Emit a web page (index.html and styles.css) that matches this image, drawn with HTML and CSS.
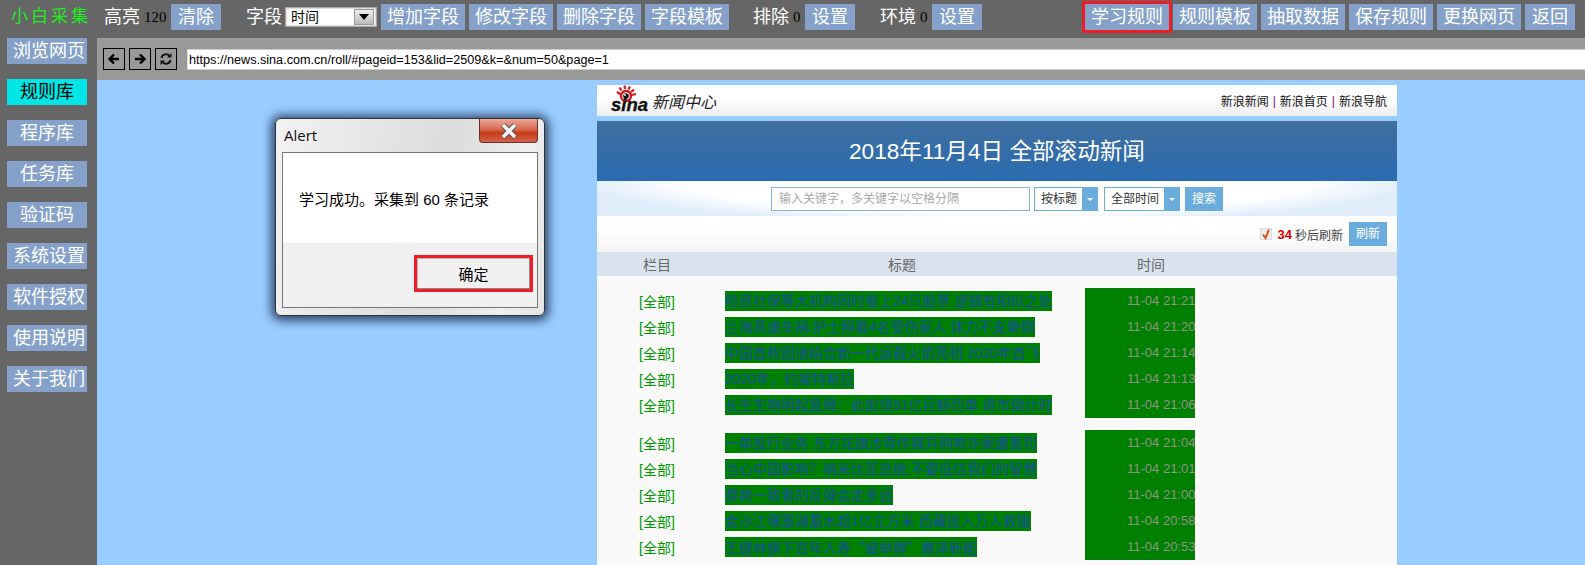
FILE: index.html
```html
<!DOCTYPE html>
<html lang="zh">
<head>
<meta charset="utf-8">
<title>小白采集</title>
<link rel="stylesheet" href="styles.css">
</head>
<body>
<header class="topbar">
  <div class="brand">小白采集</div>
  <div class="group">
    <span class="label">高亮</span><span class="count">120</span><button class="btn two">清除</button>
  </div>
  <div class="group">
    <span class="label">字段</span>
    <div class="select"><span class="select-text">时间</span><span class="select-arrow"></span></div>
    <button class="btn">增加字段</button><button class="btn">修改字段</button><button class="btn">删除字段</button><button class="btn">字段模板</button>
  </div>
  <div class="group tight">
    <span class="label">排除</span><span class="count">0</span><button class="btn two">设置</button>
  </div>
  <div class="group">
    <span class="label">环境</span><span class="count">0</span><button class="btn two">设置</button>
  </div>
  <div class="group end">
    <button class="btn marked">学习规则</button><button class="btn">规则模板</button><button class="btn">抽取数据</button><button class="btn">保存规则</button><button class="btn">更换网页</button><button class="btn two">返回</button>
  </div>
</header>

<div class="main">
  <nav class="sidebar">
    <a class="nav-item long">浏览网页</a>
    <a class="nav-item active">规则库</a>
    <a class="nav-item">程序库</a>
    <a class="nav-item">任务库</a>
    <a class="nav-item">验证码</a>
    <a class="nav-item long">系统设置</a>
    <a class="nav-item long">软件授权</a>
    <a class="nav-item long">使用说明</a>
    <a class="nav-item long">关于我们</a>
  </nav>

  <div class="browser">
    <div class="toolbar">
      <button class="tool"><svg viewBox="0 0 14 14" width="14" height="14"><path d="M12 7H3M7 2.500 2.500 7 7 11.500" fill="none" stroke="#000" stroke-width="2.400"/></svg></button>
      <button class="tool"><svg viewBox="0 0 14 14" width="14" height="14"><path d="M2 7h9M7 2.500 11.500 7 7 11.500" fill="none" stroke="#000" stroke-width="2.400"/></svg></button>
      <button class="tool"><svg viewBox="0 0 14 14" width="14" height="14"><path d="M2.500 6a4.500 4.500 0 0 1 8-2M11.500 8a4.500 4.500 0 0 1-8 2" fill="none" stroke="#111" stroke-width="2"/><path d="M12.500 1v4.500H8M1.500 13V8.500H6" fill="#111"/></svg></button>
      <div class="address">https://news.sina.com.cn/roll/#pageid=153&amp;lid=2509&amp;k=&amp;num=50&amp;page=1</div>
    </div>

    <div class="viewport">
      <div class="page">
        <div class="site-head">
          <div class="logo">
            <svg class="sina-mark" viewBox="0 0 40 31" width="40" height="31">
              <g fill="none" stroke="#d6141a">
                <circle cx="16" cy="11" r="5" stroke-width="2.400"/>
                <path d="M10 9 7 7M11.500 5.500 9.500 2.500M15 4 14.500 .5M18.500 4.500 20 1.500M21 7 24 4.500M22 10 26 9" stroke-width="2.200"/>
              </g>
              <circle cx="16" cy="11" r="2.800" fill="#111"/>
              <circle cx="15" cy="10" r=".9" fill="#fff"/>
              <text class="sina-word" x="1" y="26">sina</text>
            </svg>
            <span class="logo-text">新闻中心</span>
          </div>
          <div class="site-links"><a>新浪新闻</a><i>|</i><a>新浪首页</a><i>|</i><a>新浪导航</a></div>
        </div>

        <div class="banner">2018年11月4日 全部滚动新闻</div>

        <div class="search-row">
          <div class="search-input">输入关键字，多关键字以空格分隔</div>
          <div class="drop"><span>按标题</span><b></b></div>
          <div class="drop wide"><span>全部时间</span><b></b></div>
          <button class="blue-btn">搜索</button>
        </div>

        <div class="refresh-row">
          <span class="check"><svg viewBox="0 0 12 12" width="12" height="12"><path d="M3 6.500 5.500 10 9 1.500" fill="none" stroke="#d9531e" stroke-width="2"/></svg></span>
          <span class="refresh-num">34</span>
          <span class="refresh-text">秒后刷新</span>
          <button class="blue-btn">刷新</button>
        </div>

        <div class="table-head">
          <span class="th-cat">栏目</span><span class="th-title">标题</span><span>时间</span>
        </div>

        <div class="news">
          <section class="news-group">
            <ul class="rows">
              <li class="row"><span class="cat">[全部]</span><span class="title">险资社保等大机构同时看上24只股票 逻辑有相似之处</span></li>
              <li class="row"><span class="cat">[全部]</span><span class="title">兰海高速车祸:护士照看4名受伤家人 体力不支晕倒</span></li>
              <li class="row"><span class="cat">[全部]</span><span class="title">中国首枚固液结合新一代运载火箭亮相 2020年首飞</span></li>
              <li class="row"><span class="cat">[全部]</span><span class="title">2020年，约架特斯拉</span></li>
              <li class="row"><span class="cat">[全部]</span><span class="title">长生生物明起复牌：此前领91亿巨额罚单 退市倒计时</span></li>
            </ul>
            <ul class="times">
              <li>11-04 21:21</li><li>11-04 21:20</li><li>11-04 21:14</li><li>11-04 21:13</li><li>11-04 21:06</li>
            </ul>
          </section>
          <section class="news-group">
            <ul class="rows">
              <li class="row"><span class="cat">[全部]</span><span class="title">一单投行业务 东方花旗涉粤传媒并购欺诈案遭重罚</span></li>
              <li class="row"><span class="cat">[全部]</span><span class="title">当心中国影响？纳米比亚总统:不要低估我们的智慧</span></li>
              <li class="row"><span class="cat">[全部]</span><span class="title">券商一致看的反弹会走多远</span></li>
              <li class="row"><span class="cat">[全部]</span><span class="title">金沙江堰塞湖蓄水超1亿立方米 西藏投入万人救援</span></li>
              <li class="row"><span class="cat">[全部]</span><span class="title">王健林旗下百年人寿<span class="cjk">“</span>被举牌<span class="cjk">”</span>嘉泽新能</span></li>
            </ul>
            <ul class="times">
              <li>11-04 21:04</li><li>11-04 21:01</li><li>11-04 21:00</li><li>11-04 20:58</li><li>11-04 20:53</li>
            </ul>
          </section>
        </div>
      </div>
    </div>
  </div>
</div>

<div class="dialog">
  <div class="dialog-head">
    <span class="dialog-title">Alert</span>
    <span class="dialog-close"><svg viewBox="0 0 18 16" width="18" height="16"><path d="M3 2 15 14M15 2 3 14" stroke="#5a5a5a" stroke-width="5.500"/><path d="M3 2 15 14M15 2 3 14" stroke="#f4f4f4" stroke-width="3.400"/></svg></span>
  </div>
  <div class="dialog-client">
    <div class="dialog-msg">学习成功。采集到 60 条记录</div>
    <div class="dialog-foot"><button class="dialog-ok">确定</button></div>
  </div>
</div>
</body>
</html>
```

FILE: styles.css
```css
* { box-sizing: border-box; }
html, body { margin: 0; padding: 0; height: 565px; overflow: hidden; }
body { background: #666; font-family: "Liberation Sans", "Noto Sans CJK SC", sans-serif; font-size: 14px; color: #000; }
ul { list-style: none; margin: 0; padding: 0; }
button { font-family: inherit; border: 0; padding: 0; cursor: default; }

.topbar { height: 38px; display: flex; align-items: flex-start; padding: 4px 10px 0 11px; background: #666; }
.brand { width: 77px; height: 26px; line-height: 26px; margin-right: 16px; font-size: 17px; letter-spacing: 3px; color: #1cf01c; white-space: nowrap; }
.group { display: flex; align-items: center; gap: 4px; margin-left: 25px; height: 26px; }
.brand + .group { margin-left: 0; }
.group.tight { margin-left: 24px; }
.group.end { margin-left: auto; }
.label { font-size: 18px; color: #fff; line-height: 26px; white-space: nowrap; }
.count { font-family: "Liberation Serif", serif; font-size: 15px; color: #000; line-height: 26px; margin-right: .5px; }
.btn { height: 26px; width: 84px; background: #85a1c9; color: #fff; font-size: 18px; line-height: 26px; white-space: nowrap; }
.btn.two { width: 50px; }
.btn.marked { outline: 3px solid #ee1c25; }

.select { width: 92px; height: 20px; margin-left: -1px; display: flex; align-items: center; justify-content: space-between; background: #fff; border: 1px solid #aaa; box-shadow: inset 0 0 0 1px #ddd; padding: 0 2px 0 5px; }
.select-text { font-size: 14px; line-height: 18px; }
.select-arrow { width: 20px; height: 16px; position: relative; background: linear-gradient(#eee, #bbb); border: 1px solid #999; }
.select-arrow::after { content: ""; position: absolute; left: 4px; top: 4px; border: 5px solid transparent; border-top: 6px solid #000; border-bottom: 0; }

.main { display: flex; height: 527px; }
.sidebar { width: 97px; flex: none; padding-left: 7px; display: flex; flex-direction: column; gap: 15px; background: #666; }
.nav-item { display: block; width: 80px; height: 26px; line-height: 26px; text-align: center; background: #85a1c9; color: #fff; font-size: 18px; white-space: nowrap; }
.nav-item.long { text-indent: 4px; }
.nav-item.active { background: #00e5e5; color: #000; }

.browser { flex: 1; min-width: 0; display: flex; flex-direction: column; }
.toolbar { height: 42px; flex: none; display: flex; align-items: center; gap: 4px; padding-left: 6px; background: #999; }
.tool { width: 22px; height: 22px; display: flex; align-items: center; justify-content: center; border: 1px solid #000; background: #999; }
.address { flex: 1; height: 21px; margin-left: 6px; padding-left: 1px; line-height: 20px; background: #fff; border-top: 1px solid #ccc; border-bottom: 1px solid #ccc; border-left: 1px solid #ddd; font-size: 12.650px; white-space: nowrap; }

.viewport { flex: 1; min-height: 0; overflow: hidden; background: #9cf; padding: 5px 0 0 500px; }
.page { width: 800px; }

.site-head { height: 31px; display: flex; justify-content: space-between; align-items: center; padding: 0 10px 0 13px; background: linear-gradient(#fff 45%, #ededed); }
.logo { display: flex; align-items: center; gap: 2px; }
.sina-mark { display: block; }
.sina-word { font: italic 700 18.500px "Liberation Sans", sans-serif; fill: #111; stroke: #111; stroke-width: .35px; }
.logo-text { font-size: 16px; font-style: italic; color: #222; white-space: nowrap; }
.site-links { display: flex; align-items: center; font-size: 12px; color: #111; white-space: nowrap; }
.site-links i { font-style: normal; color: #800080; margin: 0 4px; }

.banner { margin-top: 5px; height: 60px; line-height: 62px; text-align: center; color: #fff; font-size: 22.600px; background: linear-gradient(#3f6f9f, #2a6bb0); }

.search-row { height: 35px; display: flex; justify-content: center; align-items: center; gap: 4px; background: radial-gradient(ellipse 52% 120% at 50% 0, #fff 75%, #e1edfb 100%); }
.search-input { width: 259px; height: 24px; line-height: 22px; padding-left: 7px; font-size: 12px; color: #aaa; background: #fff; border: 1px solid #8ab4d3; white-space: nowrap; }
.drop { width: 64px; height: 24px; margin-right: 2px; display: flex; background: #fff; border: 1px solid #6aaddc; font-size: 12px; line-height: 22px; color: #333; white-space: nowrap; }
.drop span { flex: 1; padding-left: 6px; }
.drop b { width: 15px; position: relative; background: #6aaddc; }
.drop b::after { content: ""; position: absolute; left: 5px; top: 10px; border: 3px solid transparent; border-top: 3px solid #fff; border-bottom: 0; }
.drop.wide { width: 76px; margin-right: 1px; }
.blue-btn { width: 38px; height: 24px; background: #6aaddc; color: #fff; font-size: 12px; line-height: 24px; }

.refresh-row { height: 36px; display: flex; justify-content: flex-end; align-items: center; padding-right: 10px; background: linear-gradient(#fff 30%, #f4f4f4); font-size: 12px; white-space: nowrap; }
.check { width: 12px; height: 12px; background: #eee; border: 1px solid #ddd; display: flex; }
.check svg { flex: none; margin: -1px; }
.refresh-num { margin-left: 6px; font-weight: 700; color: #d00; font-size: 13px; }
.refresh-text { margin-left: 3px; color: #444; }
.refresh-row .blue-btn { margin-left: 6px; }

.table-head { height: 24px; line-height: 26px; display: flex; background: #d8e3ee; color: #666; font-size: 14px; padding-left: 46px; white-space: nowrap; }
.th-cat { width: 245px; }
.th-title { width: 249px; }

.news { background: #f9f9f9; padding: 12px 0; display: flex; flex-direction: column; gap: 12px; }
.news-group { display: flex; align-items: flex-start; }
.rows { width: 488px; flex: none; }
.row { height: 26px; display: flex; align-items: center; padding-left: 42px; white-space: nowrap; }
.cat { width: 86px; flex: none; color: #090; }
.title { display: inline-block; height: 20px; line-height: 21px; background: #008000; color: #164e9c; }
.cjk { font-family: "Noto Sans CJK SC", sans-serif; }
.times { width: 110px; flex: none; padding-left: 42px; background: #008000; color: #929287; font-size: 13px; overflow: hidden; white-space: nowrap; }
.times li { height: 26px; line-height: 25px; }

.dialog { position: absolute; left: 275px; top: 118px; width: 270px; height: 198px; padding: 0 6px 7px; display: flex; flex-direction: column; border: 1px solid #333; border-radius: 6px; background: linear-gradient(100deg, #f2f2f2 0%, #e3e3e3 40%, #dcdcdc 60%, #efefef 85%, #e4e4e4 100%); box-shadow: 0 1px 10px 4px rgba(15, 35, 70, .75); }
.dialog-head { height: 33px; flex: none; display: flex; justify-content: space-between; align-items: flex-start; }
.dialog-title { font: 15px/33px "Open Sans", sans-serif; color: #111; padding-left: 2px; }
.dialog-close { width: 59px; height: 24px; display: flex; align-items: center; justify-content: center; border: 1px solid #6a3030; border-top: 0; border-radius: 0 0 4px 4px; background: linear-gradient(#eda99c, #d96a50 45%, #c83a18 60%, #d0654a); }
.dialog-client { flex: 1; display: flex; flex-direction: column; border: 1px solid #777; background: #f0f0f0; }
.dialog-msg { height: 90px; flex: none; padding: 37px 0 0 16px; line-height: 20px; background: #fff; font-size: 15px; white-space: nowrap; }
.dialog-foot { flex: 1; display: flex; justify-content: flex-end; align-items: flex-start; padding: 15px 7px 0 0; }
.dialog-ok { width: 113px; height: 31px; background: #f0f0f0; font-size: 15px; color: #000; outline: 3px solid #ee1c25; box-shadow: inset -1px -1px 0 #888, inset 1px 1px 0 #bbb; }
```
